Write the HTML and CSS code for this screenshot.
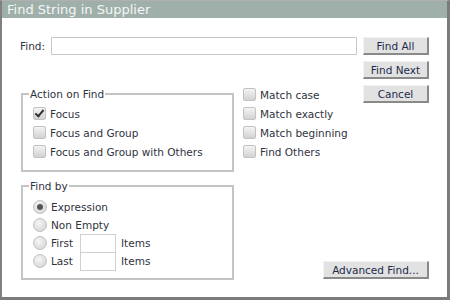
FILE: index.html
```html
<!DOCTYPE html>
<html lang="en">
<head>
    <meta charset="UTF-8">
    <title>Find String in Supplier</title>
    <link rel="stylesheet" href="styles.css">
</head>
<body>

    <!-- Ventana de dialogo -->
    <div class="window">
        <div class="title">Find String in Supplier</div>

        <div class="content">
            <div class="top">
                <div class="main">
                    <!-- Campo de busqueda -->
                    <div class="find-row">
                        <label for="findInput">Find:</label>
                        <input type="text" id="findInput" class="find-input">
                    </div>

                    <div class="middle">
                        <fieldset class="group action">
                            <legend>Action on Find</legend>
                            <div class="opt"><span class="check checked"></span>Focus</div>
                            <div class="opt"><span class="check"></span>Focus and Group</div>
                            <div class="opt"><span class="check"></span>Focus and Group with Others</div>
                        </fieldset>

                        <div class="options">
                            <div class="opt"><span class="check"></span>Match case</div>
                            <div class="opt"><span class="check"></span>Match exactly</div>
                            <div class="opt"><span class="check"></span>Match beginning</div>
                            <div class="opt"><span class="check"></span>Find Others</div>
                        </div>
                    </div>
                </div>

                <!-- Botones -->
                <div class="buttons">
                    <button class="btn">Find All</button>
                    <button class="btn">Find Next</button>
                    <button class="btn">Cancel</button>
                </div>
            </div>

            <div class="bottom">
                <fieldset class="group findby">
                    <legend>Find by</legend>
                    <div class="radio-row"><span class="radio selected"></span>Expression</div>
                    <div class="radio-row"><span class="radio"></span>Non Empty</div>
                    <div class="radio-row"><span class="radio"></span><span class="radio-label">First</span><input type="text" class="small-input"><span class="items">Items</span></div>
                    <div class="radio-row"><span class="radio"></span><span class="radio-label">Last</span><input type="text" class="small-input"><span class="items">Items</span></div>
                </fieldset>

                <button class="btn advanced">Advanced Find...</button>
            </div>
        </div>
    </div>

</body>
</html>
```

FILE: styles.css
```css
/* Estilos generales */
body {
    margin: 0;
    padding: 0;
    background-color: #ffffff;
    font-family: 'DejaVu Sans', Verdana, sans-serif;
    font-size: 10.5px;
    color: #2f3340;
}

.window {
    width: 450px;
    height: 300px;
    box-sizing: border-box;
    border-top: 1px solid #b0b0b0;
    border-left: 2px solid #808080;
    border-right: 3px solid #7b7b7b;
    border-bottom: 3px solid #7b7b7b;
    background-color: #ffffff;
}

/* Barra de titulo */
.title {
    height: 17px;
    line-height: 17px;
    padding-left: 5px;
    background-color: #9fb0ab;
    color: #f4f6f6;
    font-size: 13px;
}

.content {
    padding: 19px 18px 0 18px;
}

.top {
    display: flex;
}

.main {
    flex: 1;
}

.find-row {
    display: flex;
    align-items: center;
    gap: 6px;
}

.find-input {
    flex: 1;
    height: 18px;
    box-sizing: border-box;
    border: 1px solid #c8c8c8;
    padding: 0 3px;
    margin: 0;
}

.middle {
    display: flex;
    margin-top: 33px;
}

/* Grupos */
.group {
    width: 213px;
    box-sizing: border-box;
    margin: 0 0 0 1px;
    padding: 4px 10px 10px 10px;
    border: 2px solid #c4c4c4;
}

.group legend {
    padding: 0 1px;
    margin-left: -4px;
}

.action {
    height: 84px;
}

.opt {
    display: flex;
    align-items: center;
    height: 19px;
}

.options {
    margin-left: 9px;
    margin-top: -3px;
}

/* Casillas */
.check {
    width: 11px;
    height: 11px;
    margin-right: 4px;
    border: 1px solid #c2c2c2;
    border-radius: 2px;
    background: linear-gradient(#f4f4f4, #d2d2d2);
    position: relative;
    flex: none;
}

.check.checked::after {
    content: "";
    position: absolute;
    left: 3px;
    top: 0;
    width: 3px;
    height: 7px;
    border-right: 2px solid #333333;
    border-bottom: 2px solid #333333;
    transform: rotate(40deg);
}

.radio {
    width: 12px;
    height: 12px;
    margin-right: 4px;
    border: 1px solid #c2c2c2;
    border-radius: 50%;
    background: radial-gradient(circle at 40% 35%, #f6f6f6, #cfcfcf);
    position: relative;
    flex: none;
}

.radio.selected::after {
    content: "";
    position: absolute;
    left: 3px;
    top: 3px;
    width: 6px;
    height: 6px;
    border-radius: 50%;
    background-color: #555555;
}

.radio-label {
    width: 29px;
}

/* Botones */
.buttons {
    display: flex;
    flex-direction: column;
    gap: 6px;
    margin-left: 6px;
    width: 66px;
}

.btn {
    height: 18px;
    box-sizing: border-box;
    padding: 0;
    margin: 0;
    font-family: 'DejaVu Sans', Verdana, sans-serif;
    font-size: 10.5px;
    color: #1d2b4c;
    background-color: #e2e2e2;
    border-top: 1px solid #f2f2f2;
    border-left: 1px solid #f2f2f2;
    border-right: 2px solid #8a8a8a;
    border-bottom: 2px solid #8a8a8a;
}

.bottom {
    display: flex;
    align-items: flex-end;
    justify-content: space-between;
    margin-top: 8px;
}

.findby {
    height: 100px;
    padding-top: 6px;
}

.radio-row {
    display: flex;
    align-items: center;
    height: 18px;
}

.small-input {
    width: 36px;
    height: 19px;
    box-sizing: border-box;
    margin: 0;
    border: 1px solid #d0d0d0;
}

.items {
    margin-left: 5px;
}

.advanced {
    width: 106px;
    margin-bottom: 1px;
}
```
